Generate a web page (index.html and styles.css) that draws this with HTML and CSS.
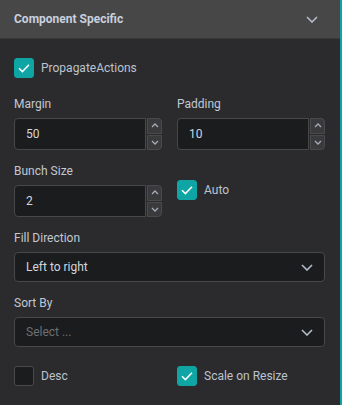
FILE: index.html
```html
<!DOCTYPE html>
<html lang="en">
<head>
  <meta charset="UTF-8">
  <title>Component Specific</title>
  <meta name="viewport" content="width=device-width, initial-scale=1.0">
  <link rel="stylesheet" href="styles.css">
</head>
<body>
  <div class="panel">
    <div class="panel-header">
      <span class="panel-title">Component Specific</span>
      <svg class="chevron" width="12" height="7" viewBox="0 0 12 7"><path d="M1 1 L6 6 L11 1" /></svg>
    </div>

    <div class="panel-body">
      <label class="check-row">
        <span class="check on"><svg width="20" height="20" viewBox="0 0 20 20"><path d="M5 10.2 L8.4 13.6 L15 6.8" /></svg></span>
        <span>PropagateActions</span>
      </label>

      <div class="grid">
        <div class="field">
          <div class="field-label">Margin</div>
          <div class="number">
            <div class="number-value">50</div>
            <div class="spin">
              <span class="spin-btn"><svg width="8" height="5" viewBox="0 0 8 5"><path d="M1 4 L4 1 L7 4" /></svg></span>
              <span class="spin-btn"><svg width="8" height="5" viewBox="0 0 8 5"><path d="M1 1 L4 4 L7 1" /></svg></span>
            </div>
          </div>
        </div>
        <div class="field">
          <div class="field-label">Padding</div>
          <div class="number">
            <div class="number-value">10</div>
            <div class="spin">
              <span class="spin-btn"><svg width="8" height="5" viewBox="0 0 8 5"><path d="M1 4 L4 1 L7 4" /></svg></span>
              <span class="spin-btn"><svg width="8" height="5" viewBox="0 0 8 5"><path d="M1 1 L4 4 L7 1" /></svg></span>
            </div>
          </div>
        </div>

        <div class="field">
          <div class="field-label">Bunch Size</div>
          <div class="number">
            <div class="number-value">2</div>
            <div class="spin">
              <span class="spin-btn"><svg width="8" height="5" viewBox="0 0 8 5"><path d="M1 4 L4 1 L7 4" /></svg></span>
              <span class="spin-btn"><svg width="8" height="5" viewBox="0 0 8 5"><path d="M1 1 L4 4 L7 1" /></svg></span>
            </div>
          </div>
        </div>
        <label class="check-row mid">
          <span class="check on"><svg width="20" height="20" viewBox="0 0 20 20"><path d="M5 10.2 L8.4 13.6 L15 6.8" /></svg></span>
          <span>Auto</span>
        </label>
      </div>

      <div class="field">
        <div class="field-label">Fill Direction</div>
        <div class="select">
          <span>Left to right</span>
          <svg class="chevron" width="12" height="7" viewBox="0 0 12 7"><path d="M1 1 L6 6 L11 1" /></svg>
        </div>
      </div>

      <div class="field">
        <div class="field-label">Sort By</div>
        <div class="select">
          <span class="placeholder">Select ...</span>
          <svg class="chevron" width="12" height="7" viewBox="0 0 12 7"><path d="M1 1 L6 6 L11 1" /></svg>
        </div>
      </div>

      <div class="grid last">
        <label class="check-row">
          <span class="check"></span>
          <span>Desc</span>
        </label>
        <label class="check-row">
          <span class="check on"><svg width="20" height="20" viewBox="0 0 20 20"><path d="M5 10.2 L8.4 13.6 L15 6.8" /></svg></span>
          <span>Scale on Resize</span>
        </label>
      </div>
    </div>
  </div>
</body>
</html>
```

FILE: styles.css
```css
html, body {
  margin: 0;
  padding: 0;
  height: 100%;
}

body {
  font-family: Roboto, "Noto Sans", sans-serif;
  font-size: 12px;
  background: #2b2b2d;
  color: #c2c8d2;
}

.panel {
  min-height: 405px;
  background: #2b2b2d;
  border-right: 2px solid #10a3a3;
  box-sizing: border-box;
}

.panel-header {
  height: 38px;
  background: #474747;
  border-bottom: 1px solid #3a3a3a;
  display: flex;
  align-items: center;
  justify-content: space-between;
  padding: 0 22px 0 14px;
}

.panel-title {
  font-weight: bold;
  color: #c7d0de;
  font-size: 12px;
}

.chevron path {
  fill: none;
  stroke: #b4bcc8;
  stroke-width: 1.6;
}

.panel-body {
  padding: 19px 15px 0 14px;
  display: flex;
  flex-direction: column;
  gap: 13px;
}

.panel-body > .check-row:first-child {
  margin-bottom: 5px;
}

.grid {
  display: grid;
  grid-template-columns: 1fr 1fr;
  column-gap: 15px;
  row-gap: 13px;
}

.grid.last {
  margin-top: 6px;
}

.check-row {
  display: flex;
  align-items: center;
  gap: 7px;
  height: 20px;
  color: #bcc3ce;
}

.check-row.mid {
  align-self: center;
}

.check {
  width: 20px;
  height: 20px;
  border-radius: 3px;
  background: #1b1c1e;
  border: 1px solid #4a4a4c;
  box-sizing: border-box;
  display: flex;
}

.check.on {
  background: #0fa5a5;
  border-color: #0fa5a5;
}

.check svg {
  margin: -1px;
}

.check path {
  fill: none;
  stroke: #fff;
  stroke-width: 1.5;
}

.field-label {
  line-height: 16px;
  margin-bottom: 6px;
  color: #c2c8d2;
}

.number {
  display: flex;
  height: 32px;
  gap: 1px;
}

.number-value {
  flex: 1;
  background: #1b1c1e;
  border: 1px solid #48484a;
  border-radius: 4px 0 0 4px;
  padding-left: 11px;
  display: flex;
  align-items: center;
  color: #d2d6de;
}

.spin {
  width: 15px;
  display: flex;
  flex-direction: column;
  gap: 1px;
}

.spin-btn {
  flex: 1;
  background: #3a3a3c;
  border: 1px solid #4a4a4c;
  display: flex;
  align-items: center;
  justify-content: center;
}

.spin-btn:first-child {
  border-radius: 0 4px 0 0;
}

.spin-btn:last-child {
  border-radius: 0 0 4px 0;
}

.spin-btn path {
  fill: none;
  stroke: #a4acb8;
  stroke-width: 1.3;
}

.select {
  height: 30px;
  box-sizing: border-box;
  background: #1b1c1e;
  border: 1px solid #48484a;
  border-radius: 4px;
  display: flex;
  align-items: center;
  justify-content: space-between;
  padding: 0 11px 0 11px;
  color: #d2d6de;
}

.placeholder {
  color: #6c7076;
}
```
